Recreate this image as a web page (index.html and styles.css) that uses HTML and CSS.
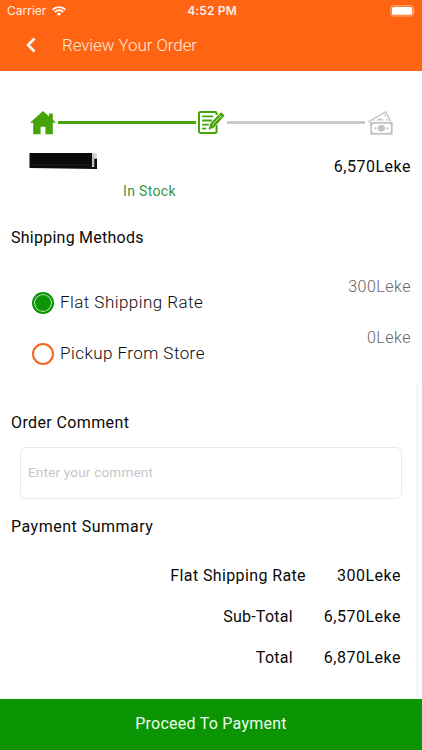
FILE: index.html
```html
<!DOCTYPE html>
<html lang="en">
<head>
<meta charset="utf-8">
<title>Review Your Order</title>
<link rel="stylesheet" href="styles.css">
</head>
<body>
<div class="app">
  <header class="header">
    <div class="status">
      <div class="carrier"><span>Carrier</span>
        <svg width="14" height="10" viewBox="0 0 14 10" fill="none" stroke="#fff" stroke-width="1.9"><path d="M.7 3.7a9 9 0 0 1 12.6 0M2.9 6a5.8 5.8 0 0 1 8.2 0"/><path d="M4.8 7.8a3.1 3.1 0 0 1 4.4 0L7 10z" fill="#fff" stroke="none"/></svg>
      </div>
      <div class="clock">4:52 PM</div>
      <svg class="battery" width="27" height="12" viewBox="0 0 27 12"><rect x=".8" y=".8" width="22.6" height="10.2" rx="2.8" fill="none" stroke="#ffb58a"/><rect x="2" y="2" width="20.2" height="7.8" rx="1.5" fill="#fff"/><path d="M24.6 4.2q1.6 1.7 0 3.4z" fill="#ffb58a"/></svg>
    </div>
    <div class="nav">
      <svg class="back" width="10" height="16" viewBox="0 0 10 16" fill="none" stroke="#fff" stroke-width="2.5"><path d="M8.5 1.5 2 8l6.5 6.5"/></svg>
      <h1 class="title">Review Your Order</h1>
    </div>
  </header>

  <main class="content">
    <div class="stepper">
      <svg width="26" height="24" viewBox="0 0 26 24" fill="#46a409"><path d="M13 0 0 11.8h3.2V23.2h7.4v-7.4h4.8v7.4h7.4V11.8H26l-3.2-3V2.4h-3.7v3z"/></svg>
      <span class="line line-done"></span>
      <svg width="27" height="24" viewBox="0 0 27 24" fill="none" stroke="#46a409"><path d="M18.6 4V2.4Q18.6 1 17.2 1H2.4Q1 1 1 2.4v18.2Q1 22 2.4 22h14.8q1.4 0 1.4-1.4V14" stroke-width="2"/><path d="M4.2 5.4h11M4.2 9.5h9.8M4.2 13.6h6.6M4.2 17.6h4" stroke-width="1.8"/><path d="m10.2 19.2 1.7-6.4L22 1.8q1-1 2 0l2 1.8q1 1 0 2L16 16.8z" fill="#46a409" stroke="#fff" stroke-width=".5"/><path d="m20.6 3.9 3.4 3.2M14 14.4l7.4-8" stroke="#fff" stroke-width=".7"/></svg>
      <span class="line"></span>
      <svg width="26" height="24" viewBox="0 0 26 24" fill="none" stroke="#c2c2c2"><path d="M1 11 18.6 1l5.2 9.5" stroke-width="1.4"/><path d="M9.5 9.6a3.8 3.2 0 0 1 7.2 0zM17.2 4.1l1.5-.8.8 1.5-1.4.7zM5.6 9.9l1.5-.8.6.9zM19 8.5l1.6-.7.8 1.7h-2z" fill="#c2c2c2" stroke="none"/><rect x="4" y="11.8" width="20.8" height="11" fill="#fff" stroke-width="1.7"/><ellipse cx="14.4" cy="17.3" rx="3.6" ry="3.2" fill="#c2c2c2" stroke="none"/><g fill="#c2c2c2" stroke="none"><circle cx="8.5" cy="17.3" r="1.1"/><circle cx="20.3" cy="17.3" r="1.1"/><path d="M4 12h3.2L4 15zM24.8 12h-3.2l3.2 3zM4 22.8h3.2L4 19.6zM24.8 22.8h-3.2l3.2-3.2z"/></g></svg>
    </div>

    <section class="product">
      <svg class="thumb" width="69" height="17" viewBox="0 0 69 17"><path d="M.5 0H68v16L.5 15z" fill="#090b0a"/><path d="M1 11.8 62 12" stroke="#292b2a" stroke-width=".7"/><path d="M64 0h4v5.7h-2.7V14H63V0z" fill="#ddd9d3"/><path d="M64.2 1v12" stroke="#817c76" stroke-width=".6"/></svg>
      <span class="stock">In Stock</span>
      <span class="price">6,570Leke</span>
    </section>

    <h2 class="heading w-methods">Shipping Methods</h2>
    <section class="methods">
      <div class="method"><span class="radio radio-on"></span><span class="label">Flat Shipping Rate</span><span class="cost">300Leke</span></div>
      <div class="method"><span class="radio"></span><span class="label">Pickup From Store</span><span class="cost">0Leke</span></div>
    </section>

    <h2 class="heading w-comment">Order Comment</h2>
    <div class="comment">Enter your comment</div>

    <h2 class="heading">Payment Summary</h2>
    <section class="summary">
      <div class="row"><span class="name">Flat Shipping Rate</span><span class="amount">300Leke</span></div>
      <div class="row"><span class="name name-short">Sub-Total</span><span class="amount">6,570Leke</span></div>
      <div class="row"><span class="name name-short">Total</span><span class="amount">6,870Leke</span></div>
    </section>
  </main>
  <div class="scrollbar"></div>
  <div class="proceed">Proceed To Payment</div>
</div>
</body>
</html>
```
FILE: styles.css
```css
* { box-sizing: border-box; }
body { margin: 0; background: #fff; }
.app {
  position: relative;
  width: 422px;
  height: 750px;
  display: flex;
  flex-direction: column;
  overflow: hidden;
  font: 400 16px/20px Roboto, "Open Sans", sans-serif;
  letter-spacing: .5px;
  color: #0a0a0a;
}
.header { height: 71px; background: #ff6412; color: #fff; }
.status {
  height: 22px;
  display: grid;
  grid-template-columns: 1fr auto 1fr;
  align-items: center;
  padding: 0 5px 0 7px;
  font: 400 12px/20px Inter, sans-serif;
  letter-spacing: 0;
  color: #fff0e5;
}
.carrier { display: flex; align-items: center; gap: 6px; }
.clock { font-weight: 600; letter-spacing: .15px; }
.battery { justify-self: end; }
.nav { height: 49px; display: flex; align-items: center; padding: 0 0 3px 26px; }
.title {
  margin: 0 0 0 26px;
  font-size: 17px;
  font-weight: 300;
  line-height: 20px;
  letter-spacing: -.1px;
  color: #ffe9dc;
}
.content { height: 628px; }
.stepper { height: 76px; display: flex; align-items: center; padding: 28px 29px 0 30px; }
.stepper svg { flex: none; }
.line { flex: 1; height: 3px; margin: 0 2px 2px; background: #c9c9c9; }
.line-done { background: #46a409; }
.product {
  height: 81px;
  display: grid;
  grid-template-columns: 94px 1fr auto;
  grid-template-rows: 26px 22px;
  align-items: center;
  padding: 7px 11px 0 29px;
}
.thumb { align-self: start; margin-top: -1px; }
.stock { grid-column: 2; grid-row: 2; font-size: 14px; letter-spacing: .35px; color: #389547; }
.price { grid-column: 3; grid-row: 1; }
.heading { margin: 0 11px; font-size: 16px; font-weight: 400; line-height: 20px; }
.w-methods { letter-spacing: .25px; }
.w-comment { letter-spacing: .38px; }
.methods { height: 165px; padding: 29px 11px 0 32px; }
.method { height: 51px; display: flex; align-items: center; }
.radio { width: 22px; height: 22px; border: 2px solid #f26522; border-radius: 50%; }
.radio-on { border-color: #0b9403; background: #0b9403; box-shadow: inset 0 0 0 1px #dff5dd; }
.label { margin: -1px 0 0 6px; font-size: 17px; font-weight: 300; letter-spacing: .45px; }
.cost { align-self: flex-start; margin-left: auto; font-weight: 300; color: #666; }
.comment {
  height: 52px;
  margin: 14px 20px 18px;
  padding: 0 7px;
  border: 1px solid #e9e9e9;
  border-radius: 6px;
  font-size: 13.5px;
  letter-spacing: .2px;
  line-height: 49px;
  color: #c5c5ca;
}
.summary { padding: 18px 21px 0; }
.row { height: 41px; display: flex; align-items: center; justify-content: flex-end; gap: 31px; }
.name { letter-spacing: .38px; }
.name-short { letter-spacing: .25px; }
.scrollbar { position: absolute; left: 416px; top: 384px; width: 3px; height: 311px; background: #f7f7f7; }
.proceed { height: 51px; background: #0b9403; color: #efffed; text-align: center; line-height: 49px; letter-spacing: .25px; }
```
